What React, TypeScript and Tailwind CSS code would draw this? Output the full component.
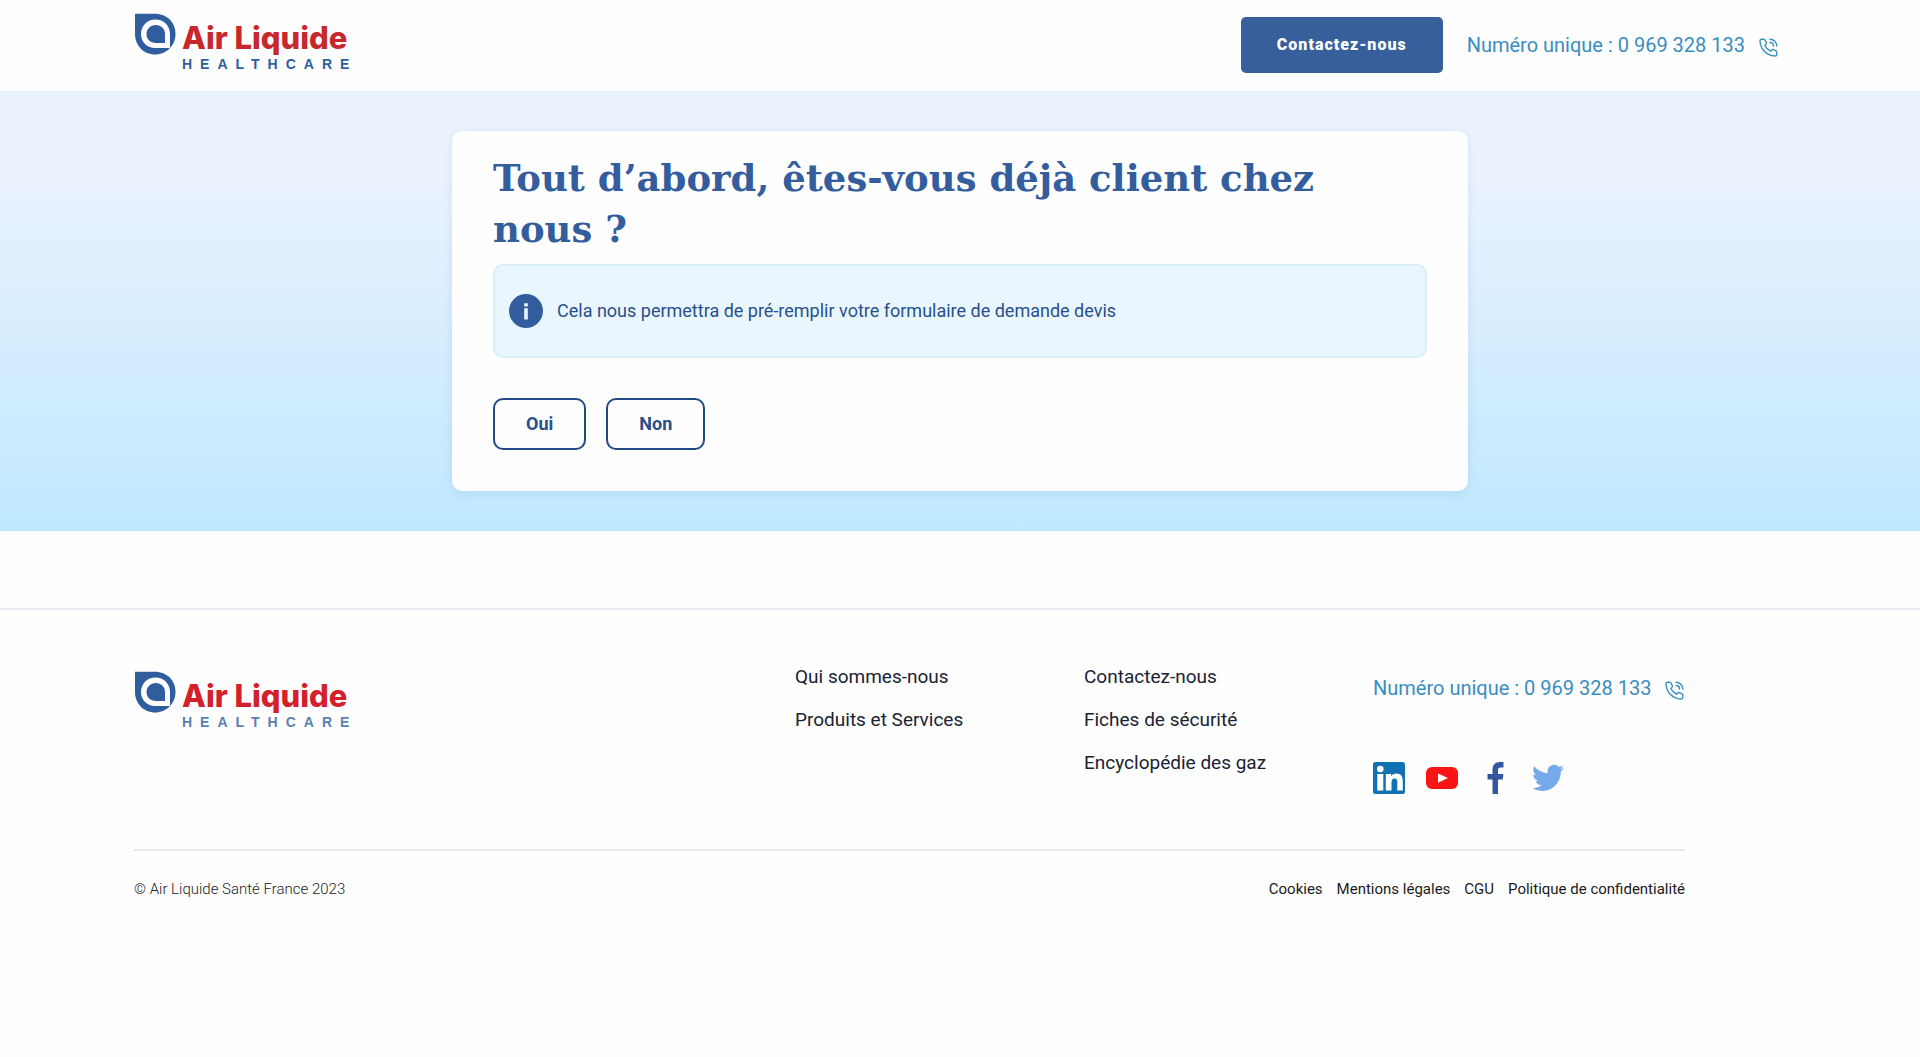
import React from "react";

function Logo({ footer = false }: { footer?: boolean }) {
  return (
    <a href="#" aria-label="Air Liquide Healthcare" className="block shrink-0">
      <svg width="240" height="60" viewBox="0 0 240 60" role="img" aria-hidden="true">
        <path d="M1 0.700H21C33 0.700 41.500 9.500 41.500 21C41.500 32.500 32.500 41.500 21 41.500C9.500 41.500 1 32.500 1 21Z" fill="#2f5d9e" />
        <path
          fillRule="evenodd"
          d="M36 35H21.500C13 35 7 29 7 21C7 12.500 13.500 6.500 21.500 6.500C29.500 6.500 36 12.500 36 21ZM31 30V21C31 15.500 27 12 21.700 12C16.500 12 12.500 16 12.500 21C12.500 26.500 16.500 30 21.700 30Z"
          fill="#fff"
        />
        <text x="48" y="36" fontFamily="Inter, sans-serif" fontWeight="800" fontSize="31" fill={footer ? "#d3202a" : "#c8282c"}>
          Air Liquide
        </text>
        <text x="48" y="56" fontFamily="Liberation Sans, sans-serif" fontWeight="700" fontSize="14" letterSpacing="8" fill={footer ? "#5b7fb5" : "#2f5d9e"}>
          HEALTHCARE
        </text>
      </svg>
    </a>
  );
}

function PhoneLink() {
  return (
    <a href="tel:0969328133" className="flex items-center gap-[14px] whitespace-nowrap text-xl leading-6 text-[#3a8dc0]">
      Numéro unique : 0 969 328 133
      <svg width="19" height="19" viewBox="0 0 19 19" fill="none" stroke="currentColor" strokeWidth="1.4" strokeLinecap="round" strokeLinejoin="round" className="mt-1" aria-hidden="true">
        <path d="M4.300 1.200H2.600C1.600 1.200 .9 2 1 3C1.500 11.500 7.500 17.500 16 18C17 18 17.800 17.400 17.800 16.400V14.300C17.800 13.500 17.400 13 16.700 12.700L14.300 11.700C13.700 11.500 13 11.600 12.600 12.100L11.600 13.200C9 12 7 10 5.800 7.500L6.900 6.400C7.400 6 7.500 5.400 7.300 4.800L6.200 2.300C5.900 1.600 5.200 1.200 4.300 1.200Z" />
        <path d="M11 1.200C14.700 1.200 17.800 4.300 17.800 8M11 4.500C13 4.500 14.500 6 14.500 8" />
      </svg>
    </a>
  );
}

const columns = [
  ["Qui sommes-nous", "Produits et Services"],
  ["Contactez-nous", "Fiches de sécurité", "Encyclopédie des gaz"],
];

const legal = ["Cookies", "Mentions légales", "CGU", "Politique de confidentialité"];

export default function App() {
  return (
    <div className="min-h-screen bg-[#fefefe] font-[Roboto,sans-serif]">
      <header className="flex items-start justify-between pr-[142px] pl-[134px]">
        <div className="pt-[13px]">
          <Logo />
        </div>
        <div className="flex items-center gap-6 pt-[17px] pb-[18px]">
          <button type="button" className="h-14 rounded-[5px] bg-[#365f9c] px-9 text-base font-black tracking-[1px] text-white">
            Contactez-nous
          </button>
          <PhoneLink />
        </div>
      </header>

      <main className="bg-linear-to-b/srgb from-[#eaf2fe] from-20% to-[#bfe8ff] px-6 py-10">
        <section className="mx-auto max-w-[1016px] rounded-[10px] bg-[#fefefe] px-[41px] pt-[22px] pb-[41px] shadow-[0_2px_10px_rgba(60,110,160,0.12)]">
          <h1 className="font-['DejaVu_Serif',serif] text-[37px] leading-[51px] font-bold text-[#335d9c]">
            Tout d’abord, êtes-vous déjà client chez nous&nbsp;?
          </h1>
          <div className="mt-[9px] flex h-[94px] items-center gap-[14px] rounded-[10px] border-2 border-[#d9eef8] bg-[#eaf6fe] px-[14px]">
            <svg width="34" height="34" viewBox="0 0 34 34" aria-hidden="true">
              <circle cx="17" cy="17" r="17" fill="#335d9c" />
              <path d="M15.200 9.300H18.800V12.400H15.200ZM15.200 14.200H18.800V25.500H15.200Z" fill="#eaf6fe" />
            </svg>
            <p className="text-lg text-[#27508c]">Cela nous permettra de pré-remplir votre formulaire de demande devis</p>
          </div>
          <div className="mt-10 flex gap-5">
            <button type="button" className="h-[52px] rounded-[10px] border-2 border-[#1f4a85] px-[31px] text-lg font-bold text-[#27508c]">
              Oui
            </button>
            <button type="button" className="h-[52px] rounded-[10px] border-2 border-[#1f4a85] px-[31px] text-lg font-bold text-[#27508c]">
              Non
            </button>
          </div>
        </section>
      </main>

      <footer className="mt-[77px] border-t-2 border-[#e8e8ee] pr-[235px] pl-[134px]">
        <div className="flex border-b-2 border-[#e8e8e8] pt-[53px] pb-[55px]">
          <div className="flex-1 pt-2">
            <Logo footer />
          </div>
          {columns.map((items) => (
            <ul key={items[0]} className="flex w-[289px] flex-col gap-[15px]">
              {items.map((item) => (
                <li key={item} className="text-[19px] leading-7">
                  <a href="#" className="block text-[#1a2233]">
                    {item}
                  </a>
                </li>
              ))}
            </ul>
          ))}
          <div className="w-[312px] pt-[13px]">
            <PhoneLink />
            <div className="mt-[62px] flex gap-[21px]">
              <a href="#" aria-label="LinkedIn">
                <svg width="32" height="32" viewBox="0 0 32 32" aria-hidden="true">
                  <rect width="32" height="32" rx="2.500" fill="#1171b2" />
                  <circle cx="7.300" cy="7" r="3.300" fill="#fff" />
                  <path d="M4.300 12H10.300V28.500H4.300ZM12.800 12H18.200V14.300C19.200 12.700 21 11.600 23.400 11.600C28.200 11.600 29.800 14.700 29.800 19.200V28.500H24.300V20.300C24.300 18.100 23.800 16.400 21.700 16.400C19.500 16.400 18.500 17.900 18.500 20.300V28.500H12.800Z" fill="#fff" />
                </svg>
              </a>
              <a href="#" aria-label="YouTube">
                <svg width="32" height="32" viewBox="0 0 32 32" aria-hidden="true">
                  <rect y="5" width="32" height="22" rx="6" fill="#fa1414" />
                  <path d="M12 11.500L22 16L12 20.800Z" fill="#fff" />
                </svg>
              </a>
              <a href="#" aria-label="Facebook">
                <svg width="32" height="32" viewBox="0 0 32 32" aria-hidden="true">
                  <path d="M13.500 32V17.500H8.500V12H13.500V8C13.500 2.800 16 0 21 0H24.500V5.400H22C19.700 5.400 19 6.300 19 8.200V12H24.400L23.700 17.500H19V32Z" fill="#34559f" />
                </svg>
              </a>
              <a href="#" aria-label="Twitter">
                <svg width="32" height="32" viewBox="0 0 24 24" fill="#76a9ea" aria-hidden="true">
                  <path d="M23.953 4.570a10 10 0 0 1-2.825.775 4.958 4.958 0 0 0 2.163-2.723c-.951.555-2.005.959-3.127 1.184a4.920 4.920 0 0 0-8.384 4.482C7.690 8.095 4.067 6.130 1.640 3.162a4.822 4.822 0 0 0-.666 2.475c0 1.710.870 3.213 2.188 4.096a4.904 4.904 0 0 1-2.228-.616v.060a4.923 4.923 0 0 0 3.946 4.827 4.996 4.996 0 0 1-2.212.085 4.936 4.936 0 0 0 4.604 3.417 9.867 9.867 0 0 1-6.102 2.105c-.390 0-.779-.023-1.170-.067a13.995 13.995 0 0 0 7.557 2.209c9.053 0 13.998-7.496 13.998-13.985 0-.210 0-.420-.015-.630A9.935 9.935 0 0 0 24 4.590z" />
                </svg>
              </a>
            </div>
          </div>
        </div>
        <div className="flex items-center justify-between py-[26px] text-[15px] leading-6">
          <p className="font-light text-[#222]">© Air Liquide Santé France 2023</p>
          <ul className="flex gap-[14px] text-[#1a1a1a]">
            {legal.map((item) => (
              <li key={item}>
                <a href="#">{item}</a>
              </li>
            ))}
          </ul>
        </div>
      </footer>
    </div>
  );
}
